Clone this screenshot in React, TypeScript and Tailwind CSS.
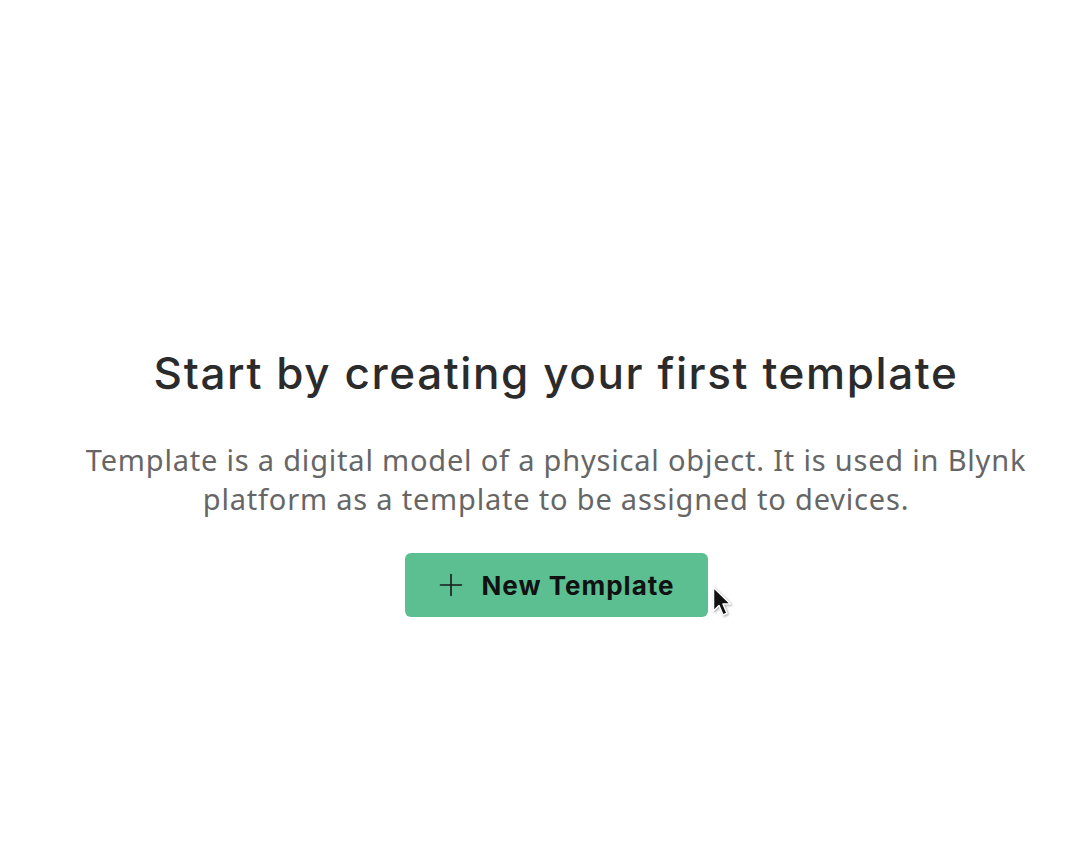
import React from 'react';

const PlusIcon: React.FC = () => (
  <svg width="24" height="24" viewBox="0 0 24 24" fill="none" stroke="#1a1a1a" strokeWidth="1.6" strokeLinecap="round">
    <path d="M12 1.5v21M1.5 12h21" />
  </svg>
);

const Cursor: React.FC = () => (
  <svg width="22" height="34" viewBox="0 0 22 34" className="absolute left-[712px] top-[586px] drop-shadow-[1px_1px_1px_rgba(0,0,0,0.35)]">
    <path d="M1.5 1.5 L1.5 25 L7 19.5 L11 29 L15 27.3 L11 18 L18.5 18 Z" fill="#111" stroke="#fff" strokeWidth="1.5" strokeLinejoin="round" />
  </svg>
);

export default function App() {
  return (
    <div className="relative min-h-[852px] w-full bg-white">
      <div className="flex flex-col items-center pl-[26px] pt-[343px] text-center">
        <h1 className="text-[44px] leading-[60px] font-medium text-[#2b2b2b] font-['Inter','Open_Sans',sans-serif] tracking-[1.6px]">
          Start by creating your first template
        </h1>
        <p className="mt-[37px] w-[970px] text-[29px] leading-[39px] text-[#666666] font-['Noto_Sans','Open_Sans',sans-serif] tracking-[0.8px]">
          Template is a digital model of a physical object. It is used in Blynk platform as a template to be assigned to devices.
        </p>
        <button className="mt-[35px] flex h-[64px] w-[303px] items-center justify-center gap-[18px] rounded-[6px] bg-[#5bbf91] pl-[2px]">
          <PlusIcon />
          <span className="text-[26px] font-bold text-[#111] font-['Inter','Open_Sans',sans-serif] tracking-[1px]">New Template</span>
        </button>
      </div>
      <Cursor />
    </div>
  );
}
